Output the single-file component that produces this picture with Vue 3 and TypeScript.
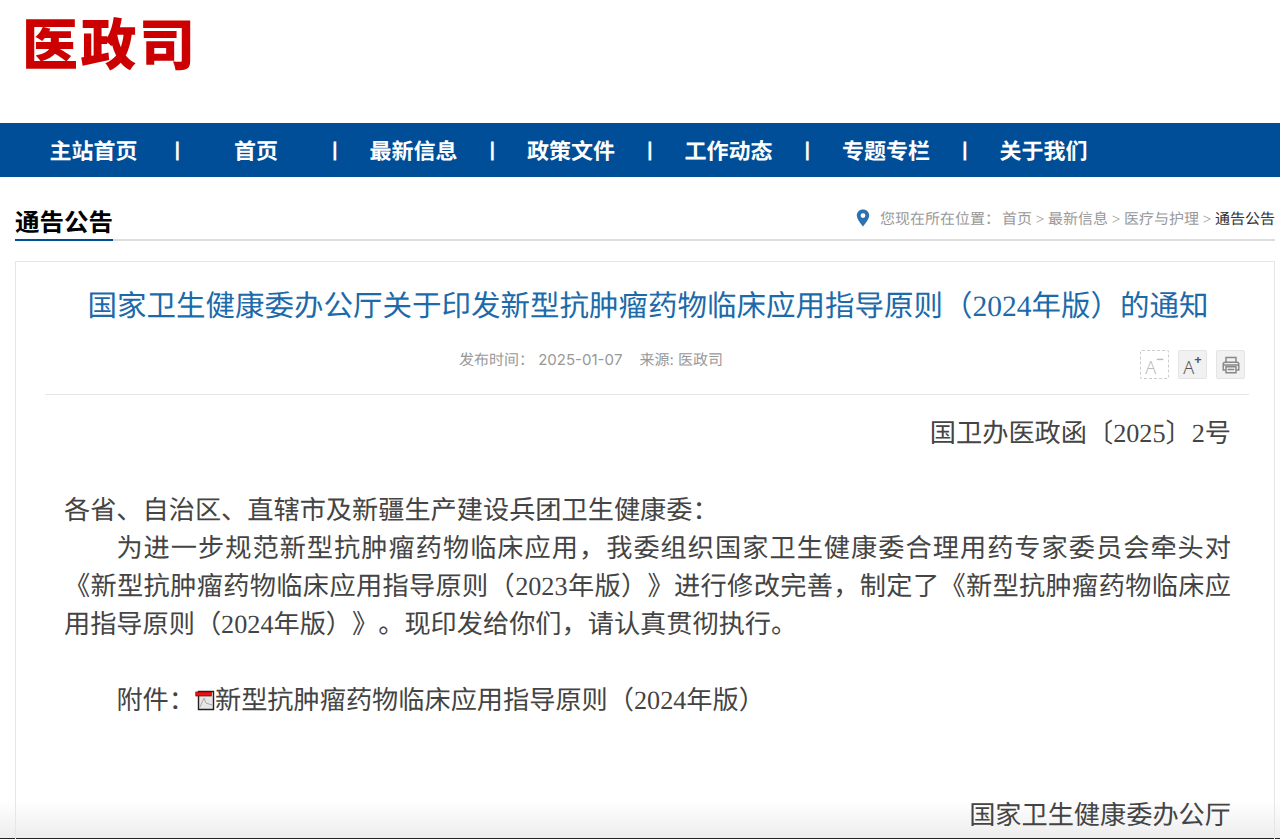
<template>
  <div class="page">
    <div class="fade"></div>
    <header class="top">
      <div class="logo">医政司</div>
    </header>
    <nav class="nav">
      <template v-for="(item, i) in navItems" :key="item">
        <a class="nav-item">{{ item }}</a>
        <span v-if="i < navItems.length - 1" class="nav-sep">|</span>
      </template>
    </nav>

    <div class="crumb-bar">
      <h2 class="section-title">通告公告</h2>
      <div class="crumbs">
        <svg class="pin" width="14" height="18" viewBox="0 0 14 18">
          <path
            fill="#2f71ad"
            fill-rule="evenodd"
            d="M7 0.5C3.3 0.5 0.8 3.2 0.8 6.5C0.8 10.5 7 17.5 7 17.5C7 17.5 13.2 10.5 13.2 6.5C13.2 3.2 10.7 0.5 7 0.5ZM7 4.2A2.4 2.4 0 1 1 7 9A2.4 2.4 0 1 1 7 4.2Z"
          />
        </svg>
        <span class="crumb-label">您现在所在位置：</span>
        <span>首页 &gt; 最新信息 &gt; 医疗与护理 &gt; </span>
        <span class="crumb-current">通告公告</span>
      </div>
    </div>

    <article class="card">
      <h1 class="title">国家卫生健康委办公厅关于印发新型抗肿瘤药物临床应用指导原则（2024年版）的通知</h1>
      <div class="meta">
        <div class="meta-text">
          <span>发布时间： 2025-01-07</span>
          <span>来源: 医政司</span>
        </div>
        <div class="tools">
          <button class="tool tool-off">
            <span class="tool-a">A</span><sup>−</sup>
          </button>
          <button class="tool">
            <span class="tool-a">A</span><sup>+</sup>
          </button>
          <button class="tool">
            <svg width="20" height="20" viewBox="0 0 18 18" fill="none" stroke="#888" stroke-width="1.3">
              <path d="M4.5 6.5V2.2H13.5V6.5" />
              <path d="M4.5 13.5H2V8.2Q2 6.5 3.7 6.5H14.3Q16 6.5 16 8.2V13.5H13.5" />
              <path d="M4.5 10.5H13.5V16H4.5Z" />
              <path d="M2 9H16M6 13H12" />
            </svg>
          </button>
        </div>
      </div>

      <div class="body">
        <p class="right doc-no">国卫办医政函〔2025〕2号</p>
        <p>&nbsp;</p>
        <p>各省、自治区、直辖市及新疆生产建设兵团卫生健康委：</p>
        <p class="indent">为进一步规范新型抗肿瘤药物临床应用，我委组织国家卫生健康委合理用药专家委员会牵头对《新型抗肿瘤药物临床应用指导原则（2023年版）》进行修改完善，制定了《新型抗肿瘤药物临床应用指导原则（2024年版）》。现印发给你们，请认真贯彻执行。</p>
        <p>&nbsp;</p>
        <p class="indent attach">
          附件：<svg class="pdf" width="20" height="21" viewBox="0 0 20 21">
            <path d="M3.5 1.5H18.5V19.5H3.5Z" fill="#e6e6e6" stroke="#222" stroke-width="1.4" />
            <path d="M5 17L9 8L11 13L17 15" fill="none" stroke="#aaa" />
            <rect x="0.8" y="2" width="15.5" height="4" fill="#ee1111" stroke="#700" stroke-width="0.7" />
          </svg>新型抗肿瘤药物临床应用指导原则（2024年版）
        </p>
        <p>&nbsp;</p>
        <p>&nbsp;</p>
        <p class="right signature">国家卫生健康委办公厅</p>
      </div>
    </article>
  </div>
</template>

<script setup lang="ts">
const navItems: string[] = ['主站首页', '首页', '最新信息', '政策文件', '工作动态', '专题专栏', '关于我们']
</script>

<style>
html,
body {
  margin: 0;
  height: 839px;
  overflow: hidden;
  background: #fff;
}
</style>

<style scoped>
.page {
  position: relative;
  height: 839px;
  overflow: hidden;
  font-family: "Liberation Serif", "Noto Sans CJK SC", serif;
  color: #444;
  text-spacing-trim: space-all;
  font-kerning: none;
  text-rendering: geometricPrecision;
}

.top {
  height: 123px;
  box-sizing: border-box;
  padding: 4px 0 0 22px;
}

.logo {
  font-family: "Noto Sans CJK SC", sans-serif;
  font-size: 56px;
  font-weight: 900;
  line-height: 76px;
  letter-spacing: 2.5px;
  color: #cc0000;
}

.nav {
  height: 54px;
  padding: 0 0 0 22.6px;
  box-sizing: border-box;
  background: #004e98;
  display: flex;
  align-items: center;
  color: #fff;
  font-size: 22px;
  font-weight: 700;
}

.nav-item {
  flex: none;
  box-sizing: border-box;
  width: 152px;
  text-align: center;
}

.nav-item:first-child {
  padding-right: 10px;
}

.nav-sep {
  flex: none;
  width: 5.5px;
  text-align: center;
  font-family: "Liberation Sans", sans-serif;
  font-size: 20px;
  font-weight: 700;
}

.crumb-bar {
  margin: 27px 5px 0 15px;
  height: 35px;
  border-bottom: 2px solid #ddd;
  display: flex;
  justify-content: space-between;
  align-items: flex-start;
}

.section-title {
  margin: 0;
  height: 35px;
  font-size: 24.5px;
  line-height: 40px;
  font-weight: 700;
  color: #000;
  border-bottom: 2px solid #004e98;
}

.crumbs {
  display: flex;
  align-items: center;
  height: 28px;
  font-size: 15px;
  color: #999;
  white-space: pre;
}

.pin {
  margin-right: 10px;
}

.crumb-label {
  margin-right: 2px;
}

.crumb-current {
  color: #333;
}

.card {
  position: relative;
  margin: 20px 5px 0 15px;
  height: 700px;
  box-sizing: border-box;
  border: 1px solid #e6e6e6;
  padding: 0 25px 0 29px;
}

.title {
  margin: 0;
  padding: 24px 0 0 2px;
  height: 60px;
  box-sizing: content-box;
  font-size: 29.5px;
  line-height: 43px;
  font-weight: 400;
  color: #1c6aaa;
  text-align: center;
  white-space: nowrap;
}

.meta {
  position: relative;
  height: 48px;
  border-bottom: 1px solid #e6e6e6;
  font-family: "Inter", "Noto Sans CJK SC", sans-serif;
  font-size: 15px;
  color: #999;
}

.meta-text {
  display: flex;
  gap: 17px;
  padding-left: 414px;
  line-height: 28px;
}

.tools {
  position: absolute;
  right: 4px;
  top: 4px;
  display: flex;
  gap: 9px;
}

.tool {
  width: 29px;
  height: 29px;
  padding: 0;
  box-sizing: border-box;
  border: 1px solid #e4e4e4;
  border-radius: 2px;
  background: #f1f1f1;
  display: flex;
  align-items: center;
  justify-content: center;
  color: #555;
  font-family: "Noto Sans", sans-serif;
}

.tool-off {
  border: 1px dashed #ccc;
  background: #fff;
  color: #bbb;
}

.tool-a {
  font-size: 18px;
  font-weight: 300;
  line-height: 20px;
  margin-top: 5px;
}

.tool sup {
  font-size: 13px;
  line-height: 12px;
  font-weight: 700;
  align-self: flex-start;
  margin-top: 2px;
}

.body {
  padding: 20px 18px 0 19px;
  font-size: 26.2px;
  line-height: 38px;
  color: #444;
  text-align: justify;
}

.body p {
  margin: 0;
}

.body .doc-no {
  margin-bottom: 1px;
}

.body .signature {
  margin-top: 1px;
}

.body .right {
  text-align: right;
}

.body .indent {
  text-indent: 2em;
}

.pdf {
  vertical-align: -2px;
}

.fade {
  position: absolute;
  left: 0;
  right: 0;
  bottom: 0;
  height: 38px;
  border-bottom: 1px solid #222;
  background: linear-gradient(rgba(235, 235, 235, 0), rgba(235, 235, 235, 0.9));
}
</style>
